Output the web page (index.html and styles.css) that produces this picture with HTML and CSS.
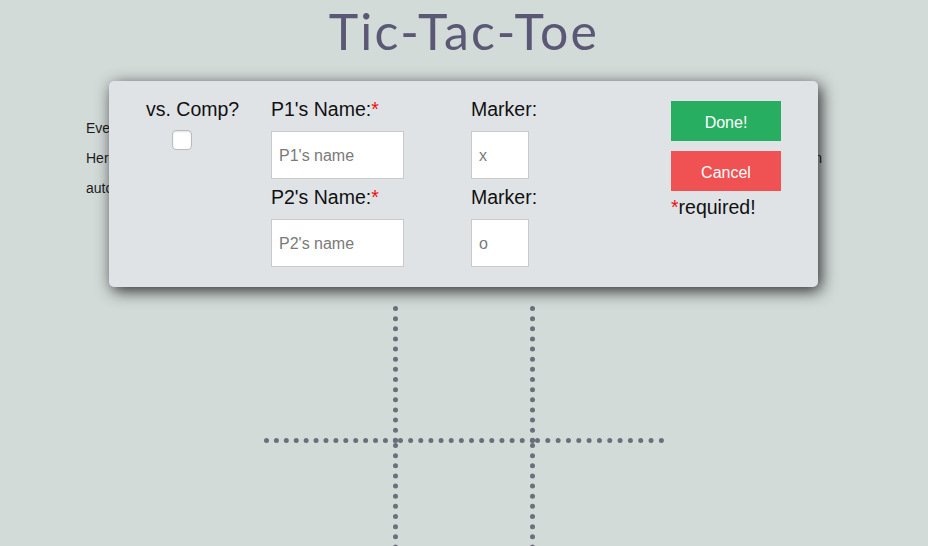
FILE: index.html
```html
<!DOCTYPE html>
<html>
<head>
<meta charset="utf-8">
<title>Tic-Tac-Toe</title>
<link rel="stylesheet" href="styles.css">
</head>
<body>
<h1 class="title">Tic-Tac-Toe</h1>
<main class="content">
  <p class="intro">Everyone knows the rules: two players take turns placing their markers on a three by three grid.</p>
  <p class="intro full">Here you can play against a friend or against the computer, so just enter your names and pick a marker to begin</p>
  <p class="intro">automatically the first player to line up three markers in a row wins the round.</p>
  <div class="board">
    <div class="cell c1"></div><div class="cell c2"></div><div class="cell c3"></div>
    <div class="cell c1"></div><div class="cell c2"></div><div class="cell c3"></div>
    <div class="cell c1 last"></div><div class="cell c2 last"></div><div class="cell c3 last"></div>
  </div>
</main>

<div class="modal">
  <div class="col col-comp">
    <label class="lbl" for="comp">vs. Comp?</label>
    <input class="check" type="checkbox" id="comp">
  </div>
  <div class="col col-name">
    <label class="lbl" for="p1">P1's Name:<span class="req">*</span></label>
    <input class="field name" id="p1" type="text" placeholder="P1's name">
    <label class="lbl second" for="p2">P2's Name:<span class="req">*</span></label>
    <input class="field name" id="p2" type="text" placeholder="P2's name">
  </div>
  <div class="col col-marker">
    <label class="lbl" for="m1">Marker:</label>
    <input class="field marker" id="m1" type="text" placeholder="x">
    <label class="lbl second" for="m2">Marker:</label>
    <input class="field marker" id="m2" type="text" placeholder="o">
  </div>
  <div class="col col-actions">
    <button class="btn done" type="button">Done!</button>
    <button class="btn cancel" type="button">Cancel</button>
    <div class="required"><span class="req">*</span>required!</div>
  </div>
</div>
</body>
</html>
```

FILE: styles.css
```css
html, body {
  margin: 0;
  padding: 0;
}
body {
  background: #d3dbd9;
  font-family: "Liberation Sans", Arial, sans-serif;
  color: #1d1d1d;
  height: 546px;
  overflow: hidden;
}
.title {
  margin: 0;
  padding-top: 1px;
  text-align: center;
  font-family: "Lato", "Noto Sans", sans-serif;
  font-weight: 400;
  font-size: 50px;
  line-height: 60px;
  color: #5a5874;
  letter-spacing: 2.2px;
}
.content {
  width: 756px;
  margin: 52px auto 0;
}
.intro {
  margin: 0;
  font-size: 14px;
  line-height: 30px;
  white-space: nowrap;
}
.intro.full {
  width: 736px;
  white-space: normal;
  text-align: justify;
  text-align-last: justify;
}
.board {
  width: 400px;
  margin: 103px auto 0;
  display: grid;
  grid-template-columns: 134px 137px 129px;
  grid-template-rows: 137px 137px 137px;
}
.cell {
  border-bottom: 5px dotted #6c6f7b;
}
.cell.last {
  border-bottom: none;
}
.c1, .c2 {
  border-right: 5px dotted #6c6f7b;
}
.modal {
  position: absolute;
  left: 109px;
  top: 81px;
  width: 709px;
  height: 206px;
  box-sizing: border-box;
  padding: 18px 37px 20px;
  background: #dfe3e6;
  border-radius: 5px;
  box-shadow: 3px 4px 16px rgba(0, 0, 0, 0.8);
  display: flex;
  align-items: flex-start;
}
.col {
  display: flex;
  flex-direction: column;
  align-items: flex-start;
}
.col-comp {
  width: 92px;
}
.col-name {
  width: 133px;
  margin-left: 33px;
}
.col-marker {
  width: 58px;
  margin-left: 67px;
}
.col-actions {
  width: 110px;
  margin-left: 142px;
  padding-top: 2px;
}
.lbl {
  display: block;
  font-size: 19.5px;
  line-height: 21px;
  color: #111;
  white-space: nowrap;
}
.lbl.second {
  margin-top: 8px;
}
.req {
  color: #f01010;
}
.check {
  appearance: none;
  -webkit-appearance: none;
  width: 20px;
  height: 20px;
  margin: 10px 0 0 26px;
  background: #fff;
  border: 1px solid #b9bcbe;
  border-radius: 4px;
  box-shadow: inset 0 1px 2px rgba(0, 0, 0, 0.12);
  box-sizing: border-box;
}
.field {
  display: block;
  box-sizing: border-box;
  height: 48px;
  margin-top: 11px;
  padding: 2px 0 0 7px;
  border: 1px solid #cacaca;
  background: #fff;
  font-family: "Liberation Sans", Arial, sans-serif;
  font-size: 16px;
  color: #333;
  outline: none;
}
.field::placeholder {
  color: #7a7a7a;
}
.name {
  width: 133px;
}
.marker {
  width: 58px;
}
.btn {
  width: 110px;
  height: 40px;
  border: none;
  margin: 0;
  padding: 3px 0 0;
  font-family: "Liberation Sans", Arial, sans-serif;
  font-size: 16px;
  color: #fff;
  cursor: pointer;
}
.done {
  background: #28ae61;
}
.cancel {
  margin-top: 10px;
  background: #f05152;
}
.required {
  margin-top: 6px;
  font-size: 19.5px;
  line-height: 21px;
  color: #111;
  white-space: nowrap;
}
```
